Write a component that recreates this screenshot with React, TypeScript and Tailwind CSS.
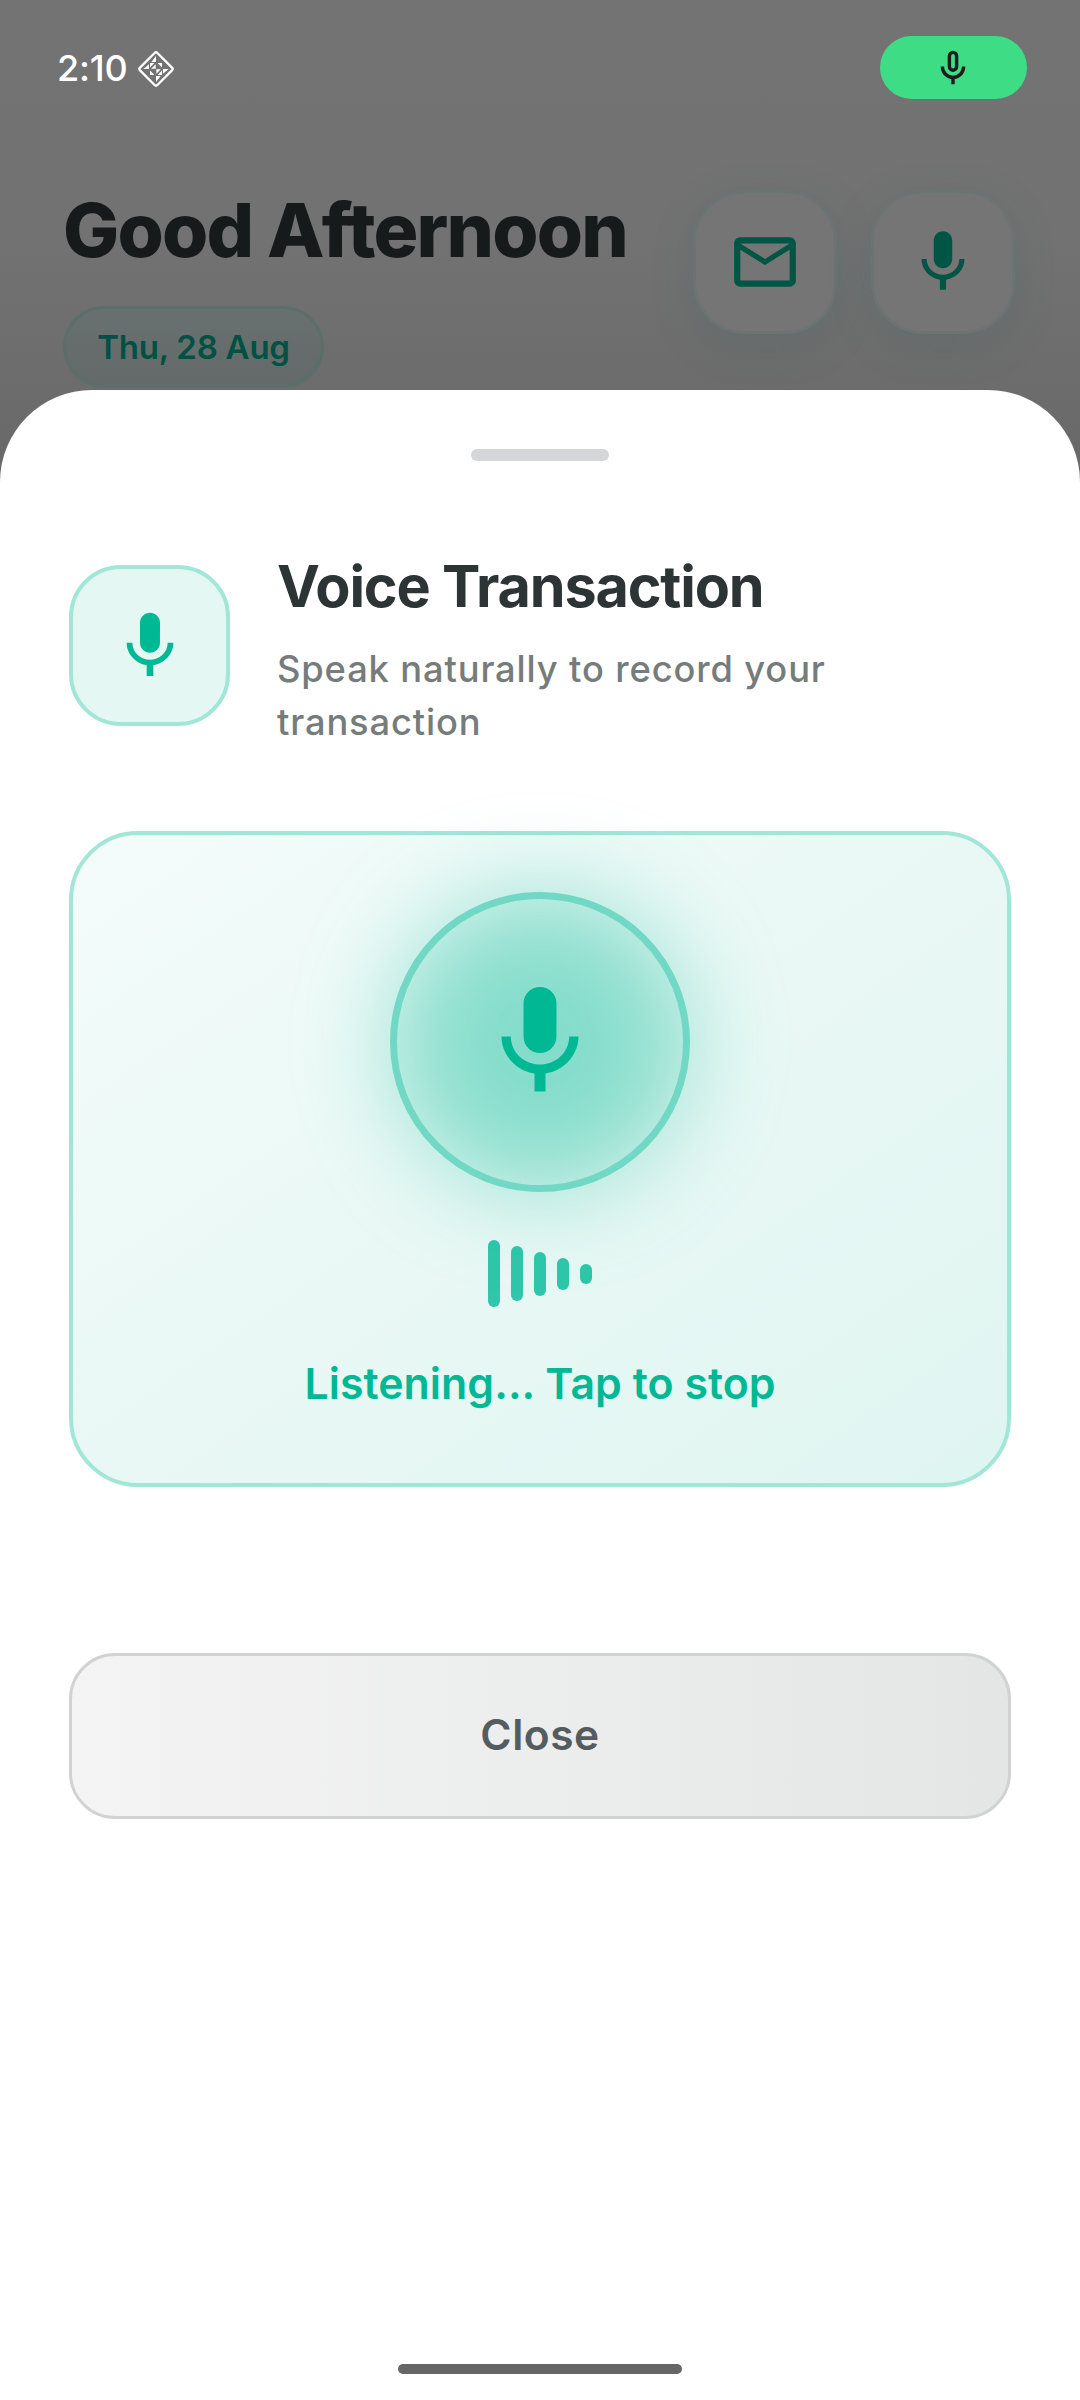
import { MdMic, MdOutlineEmail } from "react-icons/md";

const bars = [67, 55.5, 44, 32, 20];

function RecordingMicIcon() {
  return (
    <svg width="26" height="36" viewBox="0 0 26 36" fill="none" stroke="#1b1c1b" strokeWidth="3.4">
      <rect x="9.4" y="2.4" width="7.2" height="17.8" rx="3.6" />
      <path d="M2.4 16.6v.2a10.6 10.6 0 0 0 21.2 0v-.2M13 27.4v6.8" />
    </svg>
  );
}

function PinwheelIcon() {
  return (
    <svg width="38" height="38" viewBox="-19 -19 38 38">
      <rect x="-12.3" y="-12.3" width="24.6" height="24.6" rx="2" transform="rotate(45)" fill="none" stroke="#fff" strokeWidth="2.3" />
      {[0, 180].map((a) => (
        <g key={a} transform={`rotate(${a})`} fill="#fff">
          <path d="M0 -13V-7H-4.6Z" />
          <path d="M-12.6 0H-7V-4.8Z" />
          <path d="M-6 -6H-1.6L-6 -1.6Z" />
          <path d="M1.6 -6H6V-1.6Z" />
          <path d="M-.3 -.3V-4.8L-4.8 -.3Z" />
        </g>
      ))}
    </svg>
  );
}

function StatusBar() {
  return (
    <div className="flex h-[104px] items-start justify-between pl-[57px] pr-[53px] pt-9">
      <div className="flex items-start gap-[10px] pt-[14px]">
        <span className="text-[36px] font-medium leading-9 tracking-[-0.2px] text-white">2:10</span>
        <PinwheelIcon />
      </div>
      <div className="flex h-[63px] w-[147px] items-center justify-center rounded-full bg-[#3edc85] pr-px">
        <RecordingMicIcon />
      </div>
    </div>
  );
}

function Header() {
  return (
    <header className="flex items-start justify-between pl-[63px] pr-[65px]">
      <div className="pt-[81px]">
        <h1 className="text-[74.75px] font-extrabold leading-[90px] tracking-[-1.78px] text-[#161a1b]">Good Afternoon</h1>
        <div className="mt-[31px] flex h-[82px] w-[261px] items-center justify-center rounded-[41px] border-3 border-[#5b6e6a] bg-linear-to-b from-[#697070] to-[#646969] pt-px">
          <span className="text-[33px] font-semibold leading-none tracking-[-0.25px] text-[#005143]">Thu, 28 Aug</span>
        </div>
      </div>
      <div className="flex gap-[34px] pt-[86px] text-[#005544]">
        <button className="flex size-[144px] items-center justify-center rounded-[52px] border-3 border-[#6c7473] bg-[#757575] shadow-[0_12px_36px_rgba(84,106,104,0.4)]">
          <MdOutlineEmail size={74} />
        </button>
        <button className="flex size-[144px] items-center justify-center rounded-[52px] border-3 border-[#6c7473] bg-[#757575] shadow-[0_12px_36px_rgba(84,106,104,0.4)]">
          <MdMic size={74} />
        </button>
      </div>
    </header>
  );
}

function ListeningCard() {
  return (
    <section className="mt-[82px] flex h-[656px] shrink-0 flex-col items-center rounded-[69px] border-4 border-[#a2e6d8] bg-linear-to-br from-[#f4fcfb] via-[#e9f8f5] to-[#dff5f1] pt-[57px]">
      <div className="relative size-[300px] shrink-0">
        <div className="absolute inset-0 rounded-full bg-[#00b894]/34 blur-[48px]" />
        <div className="relative flex size-full items-center justify-center rounded-full border-7 border-[#70d8c4] bg-[radial-gradient(circle,rgba(0,184,148,0.16)_0%,rgba(0,184,148,0.07)_70%)] bg-origin-border">
          <MdMic size={132} color="#00b894" />
        </div>
      </div>
      <div className="mt-[48px] flex h-[67px] items-center gap-[11.5px]">
        {bars.map((h) => (
          <span key={h} className="w-[11.5px] rounded-full bg-[#2fc6a9]" style={{ height: h }} />
        ))}
      </div>
      <p className="mt-[52px] text-[42.8px] font-semibold leading-[50px] tracking-[0.06px] text-[#00b894]">Listening... Tap to stop</p>
    </section>
  );
}

export default function App() {
  return (
    <div className="flex h-[2400px] w-[1080px] flex-col overflow-hidden bg-[linear-gradient(180deg,#737373_0px,#727272_240px,#6c6c6c_390px,#686868_480px)] font-[Inter,sans-serif]">
      <div className="h-[390px] shrink-0">
        <StatusBar />
        <Header />
      </div>
      <main className="relative flex flex-1 flex-col rounded-t-[92px] bg-white px-[69px]">
        <div className="mx-auto mt-[59px] h-3 w-[138px] shrink-0 rounded-full bg-[#d5d6d8]" />
        <div className="mt-[90px] flex h-[198px] gap-[47px]">
          <div className="mt-[14px] flex size-[161px] shrink-0 items-center justify-center rounded-[52px] border-4 border-[#a2e6d8] bg-[#e4f7f3]">
            <MdMic size={80} color="#00b894" />
          </div>
          <div>
            <h2 className="text-[57.5px] font-bold leading-[70px] tracking-[-1.15px] text-[#2d3436]">Voice Transaction</h2>
            <p className="mt-[22px] w-[600px] text-[36.3px] font-medium leading-[53px] tracking-[0.86px] text-[#757c7b]">
              Speak naturally to record your transaction
            </p>
          </div>
        </div>
        <ListeningCard />
        <button className="mt-[166px] h-[166px] shrink-0 rounded-[46px] border-3 border-[#d0d3d2] bg-linear-to-r from-[#f4f4f4] to-[#e4e6e5] pb-[2px] text-[42.5px] font-semibold tracking-[0.5px] text-[#555c5e]">
          Close
        </button>
        <div className="mx-auto mb-[26px] mt-auto h-[10px] w-[284px] shrink-0 rounded-full bg-[#666666]" />
      </main>
    </div>
  );
}
